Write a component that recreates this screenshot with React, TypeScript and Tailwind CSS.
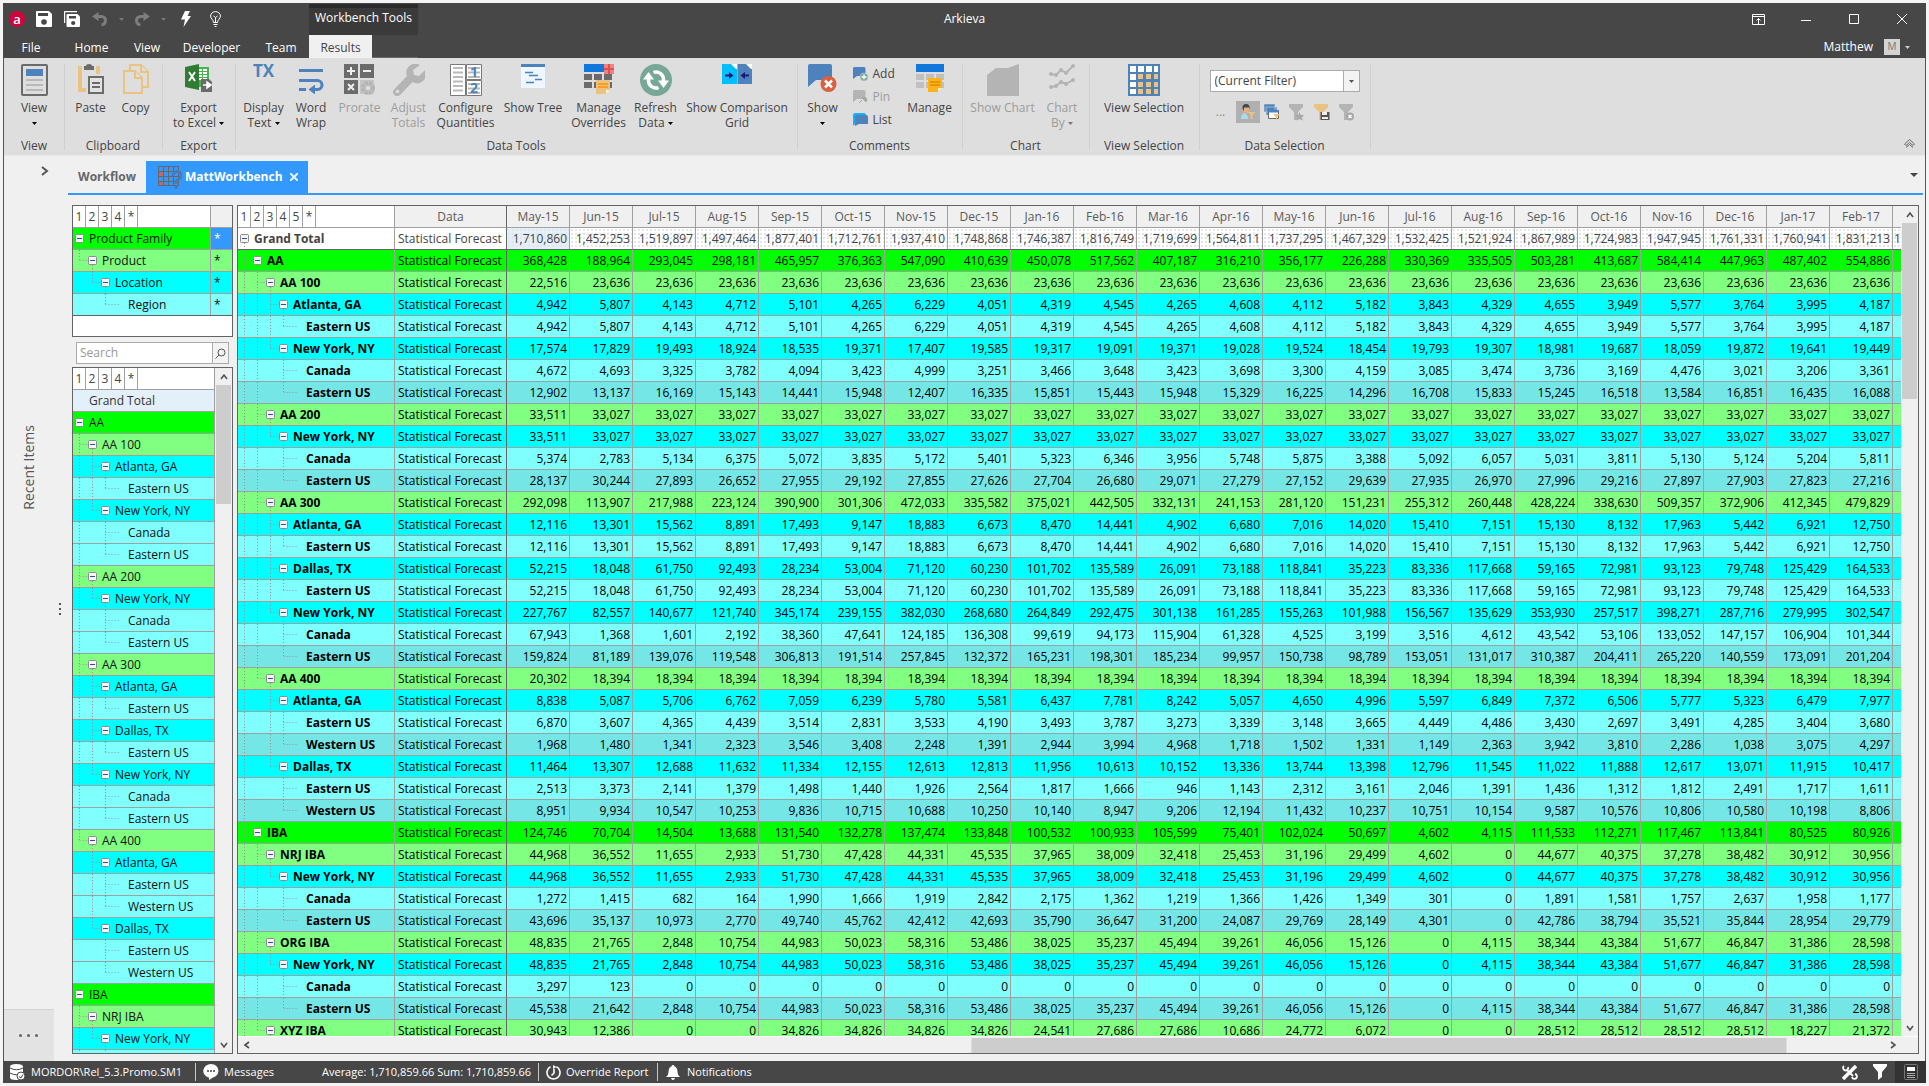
import { useState } from "react";
import type { ReactNode } from "react";

type Row = {
    level: number;
    name: string;
    values: string[];
};

const MONTHS =
    "May-15 Jun-15 Jul-15 Aug-15 Sep-15 Oct-15 Nov-15 Dec-15 Jan-16 Feb-16 Mar-16 Apr-16 May-16 Jun-16 Jul-16 Aug-16 Sep-16 Oct-16 Nov-16 Dec-16 Jan-17 Feb-17".split(" ");

const row = (level: number, name: string, values: string): Row => ({ level, name, values: values.split(" ") });

const FLAT = (first: string, rest: string) => [first, ...Array(21).fill(rest)].join(" ");

const ATL_100 = "4,942 5,807 4,143 4,712 5,101 4,265 6,229 4,051 4,319 4,545 4,265 4,608 4,112 5,182 3,843 4,329 4,655 3,949 5,577 3,764 3,995 4,187";
const ATL_300 = "12,116 13,301 15,562 8,891 17,493 9,147 18,883 6,673 8,470 14,441 4,902 6,680 7,016 14,020 15,410 7,151 15,130 8,132 17,963 5,442 6,921 12,750";
const DAL_300 = "52,215 18,048 61,750 92,493 28,234 53,004 71,120 60,230 101,702 135,589 26,091 73,188 118,841 35,223 83,336 117,668 59,165 72,981 93,123 79,748 125,429 164,533";
const NRJ = "44,968 36,552 11,655 2,933 51,730 47,428 44,331 45,535 37,965 38,009 32,418 25,453 31,196 29,499 4,602 0 44,677 40,375 37,278 38,482 30,912 30,956";
const ORG = "48,835 21,765 2,848 10,754 44,983 50,023 58,316 53,486 38,025 35,237 45,494 39,261 46,056 15,126 0 4,115 38,344 43,384 51,677 46,847 31,386 28,598";

const ROWS: Row[] = [
    row(0, "Grand Total", "1,710,860 1,452,253 1,519,897 1,497,464 1,877,401 1,712,761 1,937,410 1,748,868 1,746,387 1,816,749 1,719,699 1,564,811 1,737,295 1,467,329 1,532,425 1,521,924 1,867,989 1,724,983 1,947,945 1,761,331 1,760,941 1,831,213"),
    row(1, "AA", "368,428 188,964 293,045 298,181 465,957 376,363 547,090 410,639 450,078 517,562 407,187 316,210 356,177 226,288 330,369 335,505 503,281 413,687 584,414 447,963 487,402 554,886"),
    row(2, "AA 100", FLAT("22,516", "23,636")),
    row(3, "Atlanta, GA", ATL_100),
    row(4, "Eastern US", ATL_100),
    row(3, "New York, NY", "17,574 17,829 19,493 18,924 18,535 19,371 17,407 19,585 19,317 19,091 19,371 19,028 19,524 18,454 19,793 19,307 18,981 19,687 18,059 19,872 19,641 19,449"),
    row(4, "Canada", "4,672 4,693 3,325 3,782 4,094 3,423 4,999 3,251 3,466 3,648 3,423 3,698 3,300 4,159 3,085 3,474 3,736 3,169 4,476 3,021 3,206 3,361"),
    row(4, "Eastern US", "12,902 13,137 16,169 15,143 14,441 15,948 12,407 16,335 15,851 15,443 15,948 15,329 16,225 14,296 16,708 15,833 15,245 16,518 13,584 16,851 16,435 16,088"),
    row(2, "AA 200", FLAT("33,511", "33,027")),
    row(3, "New York, NY", FLAT("33,511", "33,027")),
    row(4, "Canada", "5,374 2,783 5,134 6,375 5,072 3,835 5,172 5,401 5,323 6,346 3,956 5,748 5,875 3,388 5,092 6,057 5,031 3,811 5,130 5,124 5,204 5,811"),
    row(4, "Eastern US", "28,137 30,244 27,893 26,652 27,955 29,192 27,855 27,626 27,704 26,680 29,071 27,279 27,152 29,639 27,935 26,970 27,996 29,216 27,897 27,903 27,823 27,216"),
    row(2, "AA 300", "292,098 113,907 217,988 223,124 390,900 301,306 472,033 335,582 375,021 442,505 332,131 241,153 281,120 151,231 255,312 260,448 428,224 338,630 509,357 372,906 412,345 479,829"),
    row(3, "Atlanta, GA", ATL_300),
    row(4, "Eastern US", ATL_300),
    row(3, "Dallas, TX", DAL_300),
    row(4, "Eastern US", DAL_300),
    row(3, "New York, NY", "227,767 82,557 140,677 121,740 345,174 239,155 382,030 268,680 264,849 292,475 301,138 161,285 155,263 101,988 156,567 135,629 353,930 257,517 398,271 287,716 279,995 302,547"),
    row(4, "Canada", "67,943 1,368 1,601 2,192 38,360 47,641 124,185 136,308 99,619 94,173 115,904 61,328 4,525 3,199 3,516 4,612 43,542 53,106 133,052 147,157 106,904 101,344"),
    row(4, "Eastern US", "159,824 81,189 139,076 119,548 306,813 191,514 257,845 132,372 165,231 198,301 185,234 99,957 150,738 98,789 153,051 131,017 310,387 204,411 265,220 140,559 173,091 201,204"),
    row(2, "AA 400", FLAT("20,302", "18,394")),
    row(3, "Atlanta, GA", "8,838 5,087 5,706 6,762 7,059 6,239 5,780 5,581 6,437 7,781 8,242 5,057 4,650 4,996 5,597 6,849 7,372 6,506 5,777 5,323 6,479 7,977"),
    row(4, "Eastern US", "6,870 3,607 4,365 4,439 3,514 2,831 3,533 4,190 3,493 3,787 3,273 3,339 3,148 3,665 4,449 4,486 3,430 2,697 3,491 4,285 3,404 3,680"),
    row(4, "Western US", "1,968 1,480 1,341 2,323 3,546 3,408 2,248 1,391 2,944 3,994 4,968 1,718 1,502 1,331 1,149 2,363 3,942 3,810 2,286 1,038 3,075 4,297"),
    row(3, "Dallas, TX", "11,464 13,307 12,688 11,632 11,334 12,155 12,613 12,813 11,956 10,613 10,152 13,336 13,744 13,398 12,796 11,545 11,022 11,888 12,617 13,071 11,915 10,417"),
    row(4, "Eastern US", "2,513 3,373 2,141 1,379 1,498 1,440 1,926 2,564 1,817 1,666 946 1,143 2,312 3,161 2,046 1,391 1,436 1,312 1,812 2,491 1,717 1,611"),
    row(4, "Western US", "8,951 9,934 10,547 10,253 9,836 10,715 10,688 10,250 10,140 8,947 9,206 12,194 11,432 10,237 10,751 10,154 9,587 10,576 10,806 10,580 10,198 8,806"),
    row(1, "IBA", "124,746 70,704 14,504 13,688 131,540 132,278 137,474 133,848 100,532 100,933 105,599 75,401 102,024 50,697 4,602 4,115 111,533 112,271 117,467 113,841 80,525 80,926"),
    row(2, "NRJ IBA", NRJ),
    row(3, "New York, NY", NRJ),
    row(4, "Canada", "1,272 1,415 682 164 1,990 1,666 1,919 2,842 2,175 1,362 1,219 1,366 1,426 1,349 301 0 1,891 1,581 1,757 2,637 1,958 1,177"),
    row(4, "Eastern US", "43,696 35,137 10,973 2,770 49,740 45,762 42,412 42,693 35,790 36,647 31,200 24,087 29,769 28,149 4,301 0 42,786 38,794 35,521 35,844 28,954 29,779"),
    row(2, "ORG IBA", ORG),
    row(3, "New York, NY", ORG),
    row(4, "Canada", FLAT("3,297", "0").replace("3,297 0", "3,297 123")),
    row(4, "Eastern US", "45,538 21,642 2,848 10,754 44,983 50,023 58,316 53,486 38,025 35,237 45,494 39,261 46,056 15,126 0 4,115 38,344 43,384 51,677 46,847 31,386 28,598"),
    row(2, "XYZ IBA", "30,943 12,386 0 0 34,826 34,826 34,826 34,826 24,541 27,686 27,686 10,686 24,772 6,072 0 0 28,512 28,512 28,512 28,512 18,227 21,372"),
];

// Levels of the rows that follow the loaded page, needed to continue the tree lines
const GRID_LEVELS = [...ROWS.map((r) => r.level), 3, 1];
const SIDE_ROWS = ROWS.slice(1, 31);
const SIDE_LEVELS = GRID_LEVELS.slice(1).map((l) => l - 1);

const LEVEL_BG = ["bg-white", "bg-[#00ff00]", "bg-[#80ff80]", "bg-[#00ffff]", "bg-[#80ffff]"];

function isAlternate(i: number) {
    return i > 0 && ROWS[i].level === 4 && ROWS[i - 1].level === 4;
}

function hasNextSibling(levels: number[], i: number, level: number) {
    for (let j = i + 1; j < levels.length; j++) {
        if (levels[j] === level) return true;
        if (levels[j] < level) return false;
    }
    return false;
}

function TreeLines({ levels, index }: { levels: number[]; index: number }) {
    const level = levels[index];
    const hasChildren = levels[index + 1] > level;
    const x = (l: number) => 6 + 13 * l + 0.5;
    const width = 13 * (level + 1);
    const verticals = [];
    for (let k = 0; k < level; k++) {
        const more = hasNextSibling(levels, index, k + 1);
        if (more || k === level - 1) {
            verticals.push(<path key={k} d={`M${x(k)} 0V${more ? 22 : 11}`} />);
        }
    }
    return (
        <svg width={width} height={22} className="shrink-0" aria-hidden="true">
            <g stroke="#a08c96" strokeDasharray="1 2" fill="none">
                {verticals}
                {level > 0 && <path d={`M${x(level - 1)} 10.5H${x(level)}`} />}
                {hasChildren && <path d={`M${x(level)} 15V22`} />}
            </g>
            {hasChildren && (
                <g>
                    <rect x={x(level) - 4} y={6.5} width={8} height={8} rx={1} fill="#f6f6f6" stroke="#8c8c8c" />
                    <path d={`M${x(level) - 2.5} 10.5h5`} stroke="#2a4fa5" />
                </g>
            )}
        </svg>
    );
}

function LevelButtons({ labels }: { labels: string[] }) {
    return (
        <div className="flex h-[21px]">
            {labels.map((label) => (
                <button key={label} type="button" className="w-[13px] border-r border-[#a0a0a0] text-center leading-[20px] text-[#444]">
                    {label}
                </button>
            ))}
        </div>
    );
}

function Chevron({ dir }: { dir: "up" | "down" | "left" | "right" }) {
    const paths = { up: "M1 6l3-4 3 4", down: "M1 2l3 4 3-4", left: "M6 1L2 4l4 3", right: "M2 1l4 3-4 3" };
    return (
        <svg width="8" height="8" viewBox="0 0 8 8" fill="none" stroke="#505050" strokeWidth="1.6" aria-hidden="true">
            <path d={paths[dir]} />
        </svg>
    );
}

function Caret({ className = "text-black" }: { className?: string }) {
    return (
        <svg width="5" height="3" viewBox="0 0 5 3" className={`inline-block align-middle ${className}`} aria-hidden="true">
            <path d="M0 0h5L2.5 3z" fill="currentColor" />
        </svg>
    );
}

/* ---------- title bar ---------- */

function IconButton({ label, className, children }: { label: string; className: string; children: ReactNode }) {
    return (
        <button type="button" aria-label={label} className={`flex items-center justify-center ${className}`}>
            {children}
        </button>
    );
}

function QuickAccess() {
    return (
        <div className="flex h-full items-center pl-[6px]">
            <span className="flex size-4 items-center justify-center rounded-full bg-[#d0043c] text-[13px] leading-[12px] font-semibold text-white">a</span>
            <IconButton label="Save" className="ml-[10px] w-[18px]">
                <svg width="16" height="16" viewBox="0 0 16 16">
                    <path d="M0 1q0-1 1-1h12l3 3v12q0 1-1 1H1q-1 0-1-1z" fill="#fff" />
                    <path d="M2 2h10v3H2z" fill="#474747" />
                    <circle cx="8" cy="11" r="2.8" fill="#474747" />
                </svg>
            </IconButton>
            <IconButton label="Save all" className="ml-[10px] w-[18px]">
                <svg width="16" height="16" viewBox="0 0 16 16">
                    <path d="M0.5 12V1.5q0-1 1-1H13" fill="none" stroke="#fff" strokeWidth="1.4" />
                    <path d="M2.5 4q0-1 1-1h10L16 5.5V15q0 1-1 1H3.5q-1 0-1-1z" fill="#fff" />
                    <path d="M5 5h7v2.5H5z" fill="#474747" />
                    <circle cx="9.2" cy="12" r="2.1" fill="#474747" />
                </svg>
            </IconButton>
            <IconButton label="Undo" className="ml-[10px] w-[18px]">
                <svg width="16" height="14" viewBox="0 0 16 14" fill="none" stroke="#7d7d7d">
                    <path d="M4 4.5h5.5a4 4 0 0 1 4 4c0 2.500-1.500 4-4 4.500" strokeWidth="3" />
                    <path d="M0 4.5L6.500 0v9z" fill="#7d7d7d" stroke="none" />
                </svg>
            </IconButton>
            <span className="w-[24px] text-center leading-[10px]"><Caret className="text-[#777]" /></span>
            <IconButton label="Redo" className="w-[18px]">
                <svg width="16" height="14" viewBox="0 0 16 14" fill="none" stroke="#7d7d7d">
                    <path d="M12 4.5H6.500a4 4 0 0 0-4 4c0 2.500 1.500 4 4 4.500" strokeWidth="3" />
                    <path d="M16 4.5L9.500 0v9z" fill="#7d7d7d" stroke="none" />
                </svg>
            </IconButton>
            <span className="w-[24px] text-center leading-[10px]"><Caret className="text-[#777]" /></span>
            <IconButton label="Run" className="w-[22px]">
                <svg width="10" height="16" viewBox="0 0 10 16"><path d="M4 0h5L6.5 5H10L2.5 16 4 8.5H0z" fill="#fff" /></svg>
            </IconButton>
            <IconButton label="Tips" className="ml-[8px] w-[20px]">
                <svg width="11" height="16" viewBox="0 0 11 16" fill="none" stroke="#fff">
                    <path d="M3.5 11.5C3.5 8.5.6 8 .6 5a4.9 4.4 0 0 1 9.8 0c0 3-2.900 3.5-2.900 6.5z" />
                    <path d="M3.5 5l2 1.5 2-1.5M5.5 6.5V11M3.5 13.5h4M4.5 15.5h2" />
                </svg>
            </IconButton>
        </div>
    );
}

function TitleBar() {
    return (
        <header className="grid shrink-0 grid-cols-[1fr_auto_1fr] grid-rows-[32px_23px] bg-[#474747] text-white">
            <div className="flex">
                <div className="w-[306px]"><QuickAccess /></div>
                <div className="mt-px w-[109px] border-t-4 border-[#2b2b2b] bg-[#3a3a3a] text-center leading-[20px]">Workbench Tools</div>
            </div>
            <h1 className="leading-[32px]">Arkieva</h1>
            <div className="flex justify-end">
                <IconButton label="Ribbon display options" className="w-12">
                    <svg width="13" height="11" viewBox="0 0 13 11" fill="none" stroke="#fff"><path d="M.5.5h12v10H.5zM.5 2.5h12M6.5 10V4.5M4.5 6.5l2-2 2 2" /></svg>
                </IconButton>
                <IconButton label="Minimize" className="w-12">
                    <svg width="10" height="10" viewBox="0 0 10 10"><path d="M0 6.5h10" stroke="#fff" /></svg>
                </IconButton>
                <IconButton label="Maximize" className="w-12">
                    <svg width="10" height="10" viewBox="0 0 10 10"><path d="M.5.5h9v9h-9z" stroke="#fff" fill="none" /></svg>
                </IconButton>
                <IconButton label="Close" className="w-12">
                    <svg width="10" height="10" viewBox="0 0 10 10"><path d="M0 0l10 10M10 0L0 10" stroke="#fff" /></svg>
                </IconButton>
            </div>
            <nav className="flex leading-[25px]">
                <a href="#file" className="w-[56px] text-center">File</a>
                <a href="#home" className="w-[65px] text-center">Home</a>
                <a href="#view" className="w-[46px] text-center">View</a>
                <a href="#developer" className="w-[83px] text-center">Developer</a>
                <a href="#team" className="w-[56px] text-center">Team</a>
                <a href="#results" className="w-[63px] bg-[#f0f0f0] text-center text-[#444]">Results</a>
                <span className="w-[46px] border-b border-[#6a6a6a]" />
            </nav>
            <span />
            <div className="flex items-center justify-end pr-[16px]">
                Matthew
                <span className="ml-[11px] flex size-4 items-center justify-center bg-[#d4d4d4] text-[10px] text-[#777]">M</span>
                <span className="ml-[5px] leading-[10px]"><Caret className="text-[#ccc]" /></span>
            </div>
        </header>
    );
}

/* ---------- ribbon ---------- */

function RibbonGroup({ label, width, children }: { label: string; width: string; children: ReactNode }) {
    return (
        <section className={`flex shrink-0 pt-[6px] ${width}`}>
            <div className="flex flex-1 flex-col pb-[2px]">
                <div className="flex flex-1 justify-center">{children}</div>
                <div className="h-[15px] text-center leading-[15px]">{label}</div>
            </div>
            <div className="-mr-px mb-[5px] border-r border-[#d0d0d0]" />
        </section>
    );
}

interface RibbonButtonProps {
    lines: string[];
    width: string;
    disabled?: boolean;
    menu?: boolean;
    children: ReactNode;
}

function RibbonButton({ lines, width, disabled, menu, children }: RibbonButtonProps) {
    return (
        <button type="button" disabled={disabled} className={`flex shrink-0 flex-col items-center ${width} ${disabled ? "text-[#9c9c9c]" : "text-[#444]"}`}>
            <span className="mb-[4px] flex h-8 items-start">{children}</span>
            {lines.map((line, i) => (
                <span key={i} className="h-[15px] leading-[15px] whitespace-nowrap">
                    {line}
                    {menu && i === lines.length - 1 && (
                        <>
                            {line && " "}
                            <Caret className={disabled ? "text-[#777]" : "text-black"} />
                        </>
                    )}
                </span>
            ))}
        </button>
    );
}

function ViewIcon() {
    return (
        <svg width="27" height="32" viewBox="0 0 27 32">
            <rect x="1" y="1" width="25" height="30" rx="1" fill="#dedede" stroke="#6b6b6b" strokeWidth="2" />
            <rect x="5" y="5" width="17" height="7" fill="#4d82bc" />
            <path d="M5 16h17M5 21h17M5 26h17" stroke="#b9b9b9" strokeWidth="2" />
        </svg>
    );
}

function PasteIcon() {
    return (
        <svg width="26" height="30" viewBox="0 0 26 30">
            <path d="M0 2h4v22h4v4H0zM18 2h4v8h-4z" fill="#eac282" />
            <path d="M6 2h2q0-2 3-2t3 2h2v4H6z" fill="#6b6b6b" />
            <path d="M11 13h14v16H11z" fill="#e2e2e2" stroke="#6b6b6b" strokeWidth="2" />
            <path d="M14 19h8M14 23h8" stroke="#6b6b6b" strokeWidth="2" />
        </svg>
    );
}

function CopyIcon() {
    return (
        <svg width="26" height="30" viewBox="0 0 26 30" fill="#dedede" stroke="#eac282" strokeWidth="2">
            <path d="M7 6V1h11l7 7v15h-5" />
            <path d="M18 1v7h7" />
            <path d="M1 7h11l7 7v15H1z" />
            <path d="M12 7v7h7" />
        </svg>
    );
}

function ExcelIcon() {
    return (
        <svg width="27" height="28" viewBox="0 0 27 28">
            <path d="M12 3h12v20H12z" fill="#4caf50" />
            <path d="M14 6h3M18 6h4M14 9h3M18 9h4M14 12h3M18 12h4M14 15h3M18 15h4" stroke="#fff" strokeWidth="2" />
            <path d="M0 3l14-3v26L0 23z" fill="#2e7d32" />
            <path d="M4 8l6 9M10 8l-6 9" stroke="#fff" strokeWidth="2" />
            <path d="M16 15h8l3 3v10H16z" fill="#6b6b6b" />
            <path d="M18 21h5M22 18l4 3-4 3z" stroke="#fff" strokeWidth="1.5" fill="#fff" />
        </svg>
    );
}

function WrapIcon() {
    return (
        <svg width="25" height="30" viewBox="0 0 25 30" fill="none" stroke="#4d82bc" strokeWidth="3">
            <path d="M0 6.5h24M0 16.5h18.5a4.5 4.5 0 0 1 0 9H14M0 25.5h7" />
            <path d="M16 20.5v10L9.5 25.5z" fill="#4d82bc" stroke="none" />
        </svg>
    );
}

function ProrateIcon() {
    return (
        <svg width="31" height="32" viewBox="0 0 31 32">
            <path d="M0 0h14v14H0zM16 0h14v14H16zM0 16h14v14H0z" fill="#6b6b6b" />
            <path d="M3 7h8M7 3v8M19 7h8M4 20l6 6M10 20l-6 6" stroke="#eee" strokeWidth="2" />
            <path d="M16 16h14v14H16z" fill="#c4c4c4" />
            <circle cx="24" cy="24" r="5" fill="none" stroke="#b4b4b4" strokeWidth="4" strokeDasharray="3 1" />
            <circle cx="24" cy="24" r="2" fill="#dedede" />
        </svg>
    );
}

function WrenchIcon() {
    return (
        <svg width="32" height="32" viewBox="0 0 32 32">
            <path d="M27 1A9 9 0 0 0 14 12L1.5 25a4 4 0 0 0 5.5 6L19.5 18A9 9 0 0 0 32 6l-6 6-5-1-1-5z" fill="#b4b4b4" />
            <circle cx="4.5" cy="27.5" r="1.8" fill="#dedede" />
        </svg>
    );
}

function ConfigureIcon() {
    return (
        <svg width="32" height="32" viewBox="0 0 32 32">
            <path d="M.5.5h15v31H.5zM16.5.5h15v15h-15zM16.5 16.5h15v15h-15z" fill="#fff" stroke="#7a7a7a" />
            <path d="M3 4h10M3 8.500h10M3 13h10M3 17.500h10M3 22h10M3 26.500h10M18 4h12M18 8.500h12M18 13h12M18 20h12M18 24.500h12M18 29h12" stroke="#b9b9b9" strokeWidth="2" />
            <text x="24" y="13" textAnchor="middle" fontSize="14" fontWeight="700" fill="#4d82bc">1</text>
            <text x="24" y="29" textAnchor="middle" fontSize="14" fontWeight="700" fill="#4d82bc">2</text>
        </svg>
    );
}

function ShowTreeIcon() {
    return (
        <svg width="24" height="24" viewBox="0 0 24 24">
            <path d="M0 0h24v24H0z" fill="#eef6ff" />
            <path d="M0 0h24v3H0z" fill="#4d82bc" />
            <path d="M4 8.500h8M8 11.500h9M14 15.500h7M5 18.500h8" stroke="#4d82bc" strokeWidth="1.5" />
        </svg>
    );
}

function GridNoteIcon({ override }: { override?: boolean }) {
    const cell = override ? "#6b6b6b" : "#c0c0c0";
    return (
        <svg width={override ? 30 : 28} height="30" viewBox={override ? "0 0 30 30" : "0 0 28 30"}>
            <path d="M0 0h28v8H0z" fill="#1177da" />
            <path d="M0 10h8v6H0zM10 10h8v6h-8zM20 10h8v6h-8zM0 18h8v6H0zM10 18h8v6h-8zM20 18h8v6h-8z" fill={cell} />
            {override && (
                <>
                    <path d="M20 0h10v10H20z" fill="#f48181" />
                    <path d="M25 0v10M20 5h10" stroke="#d9534f" strokeWidth="2" />
                </>
            )}
            <g transform={override ? "translate(0 2)" : ""}>
                <path d="M12 14h14v10l-4 4H12z" fill={override ? "#eac282" : "#ffb319"} />
                <path d="M14 18h10M14 21h10" stroke={override ? "#ff9000" : "#d98e00"} strokeWidth="1.5" />
                <path d="M22 28v-4h4z" fill="#fff0d0" />
            </g>
        </svg>
    );
}

function RefreshIcon() {
    return (
        <svg width="32" height="32" viewBox="0 0 32 32">
            <circle cx="16" cy="16" r="16" fill="#76a797" />
            <g fill="none" stroke="#fff" strokeWidth="3.5">
                <path d="M8.500 14v2.500a7.500 7.500 0 0 0 10 7.100" />
                <path d="M13.500 8.400a7.500 7.500 0 0 1 10 7.100V18" />
            </g>
            <path d="M3 15.500L8.500 8l5.500 7.500zM18 16.500h11L23.500 24z" fill="#fff" />
        </svg>
    );
}

function CompareIcon() {
    return (
        <svg width="30" height="20" viewBox="0 0 30 20">
            <path d="M0 0h15v20H0z" fill="#00bfff" />
            <path d="M15.500 0H30v20H15.500z" fill="#4d82bc" />
            <path d="M9 0h6v5h-1zM24 0h6v5h-1z" fill="#fff" />
            <path d="M3 11.500h5M22 11.500h5" stroke="#1a1a7a" strokeWidth="2" />
            <path d="M7 8l4.500 3.500L7 15zM23 8v7l-4.500-3.500z" fill="#1a1a7a" />
        </svg>
    );
}

function ShowCommentIcon() {
    return (
        <svg width="29" height="28" viewBox="0 0 29 28">
            <path d="M0 2q0-2 2-2h20q2 0 2 2v14H8l-8 7z" fill="#4d82bc" />
            <circle cx="20.500" cy="20" r="8" fill="#d9613f" />
            <path d="M17 16.500l7 7M24 16.500l-7 7" stroke="#fff" strokeWidth="2.5" />
        </svg>
    );
}

function SmallComment({ kind }: { kind: "add" | "pin" | "list" }) {
    return (
        <svg width="15" height="14" viewBox="0 0 15 14">
            {kind === "list" && <path d="M0 2q0-2 2-2h9q2 0 2 2v7H4l-4 4z" fill="#12b2f5" />}
            <path
                d={kind === "list" ? "M2 3.500Q2 2 3.500 2H13q2 0 2 2v7H6l-4 2z" : "M0 1.500Q0 0 1.500 0H11q1.500 0 1.500 1.500V9H4l-4 3z"}
                fill={kind === "pin" ? "#b4b4b4" : "#4d82bc"}
            />
            {kind === "add" && (
                <>
                    <circle cx="11" cy="10" r="4" fill="#76a797" stroke="#dedede" strokeWidth=".5" />
                    <path d="M11 7.500v5M8.500 10h5" stroke="#fff" strokeWidth="1.3" />
                </>
            )}
            {kind === "pin" && <path d="M6 13l3-3M9 8l4 4 1-3-2-2z" stroke="#a8a8a8" fill="#a8a8a8" />}
        </svg>
    );
}

function ChartAreaIcon() {
    return <svg width="32" height="32" viewBox="0 0 32 32"><path d="M0 11L9 4h12L32 0v32H0z" fill="#b4b4b4" /></svg>;
}

function ChartLinesIcon() {
    return (
        <svg width="26" height="26" viewBox="0 0 26 26" fill="none" stroke="#b4b4b4" strokeWidth="2">
            <path d="M2 10l5 1 5-5 5 3 7-7" />
            <path d="M2 23l5-1 5-4 5 2 7-4" />
            <g fill="#b4b4b4" strokeWidth="1">
                <circle cx="2" cy="10" r="1.5" /><circle cx="7" cy="11" r="1.5" /><circle cx="12" cy="6" r="1.5" /><circle cx="17" cy="9" r="1.5" /><circle cx="24" cy="2" r="1.5" />
                <circle cx="2" cy="23" r="1.5" /><circle cx="7" cy="22" r="1.5" /><circle cx="12" cy="18" r="1.5" /><circle cx="17" cy="20" r="1.5" /><circle cx="24" cy="16" r="1.5" />
            </g>
        </svg>
    );
}

function SelectionGridIcon() {
    return (
        <svg width="32" height="32" viewBox="0 0 32 32">
            <path d="M0 0h32v32H0z" fill="#4d82bc" />
            <path d="M2 2h6v6H2zM10 2h6v6h-6zM18 2h6v6h-6zM26 2h4v6h-4zM2 10h6v6H2zM2 18h6v5H2zM2 25h6v5H2z" fill="#fff" />
            <path d="M10 10h5v5h-5zM18 10h5v5h-5zM26 10h4v5h-4zM10 18h5v5h-5zM18 18h5v5h-5zM26 18h4v5h-4zM10 25h5v5h-5zM18 25h5v5h-5zM26 25h4v5h-4z" fill="#eac282" />
        </svg>
    );
}

function FunnelIcon({ kind }: { kind: "star" | "save" | "clear" }) {
    return (
        <svg width="16" height="17" viewBox="0 0 16 17">
            <path d="M0 0h14v3L9 8v8H5V8L0 3z" fill={kind === "save" ? "#eac282" : "#b4b4b4"} />
            {kind === "star" && <path d="M10.500 8l1.500 3h3l-2 2.500.8 3-3.300-1.500-3 1.500.8-3-2-2.500h3z" fill="#a8a8a8" />}
            {kind === "save" && (
                <>
                    <path d="M6.500 8h9v8h-9z" fill="#555" />
                    <path d="M8 8h5v3H8zM8 13h6v2H8z" fill="#eee" />
                </>
            )}
            {kind === "clear" && (
                <>
                    <circle cx="11" cy="12.500" r="4" fill="#a8a8a8" />
                    <path d="M9.500 11l3 3M12.500 11l-3 3" stroke="#fff" strokeWidth="1.4" />
                </>
            )}
        </svg>
    );
}

function Ribbon() {
    return (
        <div className="flex h-[98px] shrink-0 justify-between border-b border-[#e6e6e6] bg-[#dedede] text-[#444]">
            <div className="flex">
                <RibbonGroup label="View" width="w-[60px]">
                    <RibbonButton lines={["View", ""]} width="w-[48px]" menu><ViewIcon /></RibbonButton>
                </RibbonGroup>
                <RibbonGroup label="Clipboard" width="w-[98px]">
                    <RibbonButton lines={["Paste"]} width="w-[45px]"><PasteIcon /></RibbonButton>
                    <RibbonButton lines={["Copy"]} width="w-[45px]"><CopyIcon /></RibbonButton>
                </RibbonGroup>
                <RibbonGroup label="Export" width="w-[73px]">
                    <RibbonButton lines={["Export", "to Excel"]} width="w-[60px]" menu><ExcelIcon /></RibbonButton>
                </RibbonGroup>
                <RibbonGroup label="Data Tools" width="w-[562px]">
                    <RibbonButton lines={["Display", "Text"]} width="w-[48px]" menu>
                        <span className="text-[17px] leading-[14px] font-bold text-[#4d82bc]">TX</span>
                    </RibbonButton>
                    <RibbonButton lines={["Word", "Wrap"]} width="w-[47px]"><WrapIcon /></RibbonButton>
                    <RibbonButton lines={["Prorate"]} width="w-[50px]" disabled><ProrateIcon /></RibbonButton>
                    <RibbonButton lines={["Adjust", "Totals"]} width="w-[48px]" disabled><WrenchIcon /></RibbonButton>
                    <RibbonButton lines={["Configure", "Quantities"]} width="w-[66px]"><ConfigureIcon /></RibbonButton>
                    <RibbonButton lines={["Show Tree"]} width="w-[69px]"><ShowTreeIcon /></RibbonButton>
                    <RibbonButton lines={["Manage", "Overrides"]} width="w-[62px]"><GridNoteIcon override /></RibbonButton>
                    <RibbonButton lines={["Refresh", "Data"]} width="w-[52px]" menu><RefreshIcon /></RibbonButton>
                    <RibbonButton lines={["Show Comparison", "Grid"]} width="w-[111px]"><CompareIcon /></RibbonButton>
                </RibbonGroup>
                <RibbonGroup label="Comments" width="w-[165px]">
                    <div className="flex pr-[6px]">
                        <RibbonButton lines={["Show", ""]} width="w-[50px]" menu><ShowCommentIcon /></RibbonButton>
                        <div className="flex w-[56px] flex-col gap-[3px] pl-[5px]">
                            <button type="button" className="flex h-5 items-center gap-[5px]"><SmallComment kind="add" />Add</button>
                            <button type="button" disabled className="flex h-5 items-center gap-[5px] text-[#9c9c9c]"><SmallComment kind="pin" />Pin</button>
                            <button type="button" className="flex h-5 items-center gap-[5px]"><SmallComment kind="list" />List</button>
                        </div>
                        <RibbonButton lines={["Manage"]} width="w-[52px]"><GridNoteIcon /></RibbonButton>
                    </div>
                </RibbonGroup>
                <RibbonGroup label="Chart" width="w-[127px]">
                    <div className="flex pr-[2px]">
                        <RibbonButton lines={["Show Chart"]} width="w-[75px]" disabled><ChartAreaIcon /></RibbonButton>
                        <RibbonButton lines={["Chart", "By"]} width="w-[44px]" disabled menu><ChartLinesIcon /></RibbonButton>
                    </div>
                </RibbonGroup>
                <RibbonGroup label="View Selection" width="w-[110px]">
                    <RibbonButton lines={["View Selection"]} width="w-[90px]"><SelectionGridIcon /></RibbonButton>
                </RibbonGroup>
                <RibbonGroup label="Data Selection" width="w-[171px]">
                    <div className="w-[150px] pt-[6px]">
                        <div className="relative">
                            <select aria-label="Filter" className="block h-[22px] w-full appearance-none border border-[#ababab] bg-white pl-[4px] text-[#444]">
                                <option>(Current Filter)</option>
                            </select>
                            <span className="pointer-events-none absolute inset-y-px right-px flex w-4 items-center justify-center border-l border-[#ababab] bg-[#f3f3f3]">
                                <Caret className="text-[#555]" />
                            </span>
                        </div>
                        <div className="mt-[9px] flex h-[22px] items-center gap-1">
                            <button type="button" aria-label="More" className="w-[22px] text-center leading-[18px] text-[#888]">...</button>
                            <IconButton label="My filter" className="h-[22px] w-6 bg-[#b0b0b0]">
                                <svg width="14" height="16" viewBox="0 0 14 16">
                                    <circle cx="5" cy="3.500" r="3.500" fill="#3b4a4f" />
                                    <path d="M3 3.500h5V8l-2 2-3-2z" fill="#e8b080" />
                                    <path d="M0 15q0-5 3.500-6L6 11l1.500 4z" fill="#a8dcf0" />
                                    <path d="M7 8h7l-2.500 3v4H9.500v-4z" fill="#eac282" />
                                </svg>
                            </IconButton>
                            <div className="flex gap-[9px]">
                                <IconButton label="Layers" className="w-4">
                                    <svg width="16" height="16" viewBox="0 0 16 16">
                                        <path d="M0 0h11v8H0zM2 3h11v8H2z" fill="#4d82bc" stroke="#dedede" strokeWidth=".6" />
                                        <path d="M4.500 6.500h10v8h-10z" fill="#fff" stroke="#666" />
                                        <path d="M4 6h11v2.500H4z" fill="#4d82bc" />
                                        <path d="M9 10h7l-3 3v3h-1v-3z" fill="#eac282" />
                                    </svg>
                                </IconButton>
                                <IconButton label="Favourite filter" className="w-4"><FunnelIcon kind="star" /></IconButton>
                                <IconButton label="Save filter" className="w-4"><FunnelIcon kind="save" /></IconButton>
                                <IconButton label="Clear filter" className="w-4"><FunnelIcon kind="clear" /></IconButton>
                            </div>
                        </div>
                    </div>
                </RibbonGroup>
            </div>
            <IconButton label="Collapse ribbon" className="mr-[10px] mb-[6px] self-end">
                <svg width="11" height="10" viewBox="0 0 11 10" fill="none" stroke="#666">
                    <path d="M.5 5l5-4.500 5 4.500-1.500 1.500-3.500-3L2 6.500zM2 8.500l3.500-3 3.500 3" />
                </svg>
            </IconButton>
        </div>
    );
}

/* ---------- work area ---------- */

function RecentRail() {
    return (
        <aside className="flex w-[64px] shrink-0">
            <div className="flex w-[50px] flex-col">
                <button type="button" aria-label="Expand" className="flex h-[30px] items-center justify-end pr-[5px]">
                    <svg width="8" height="10" viewBox="0 0 8 10" fill="none" stroke="#555" strokeWidth="2"><path d="M1 1l5 4-5 4" /></svg>
                </button>
                <div className="flex flex-1 items-start justify-center pt-[239px]">
                    <span className="rotate-180 text-[14px] leading-[20px] text-[#555] [writing-mode:vertical-rl]">Recent Items</span>
                </div>
                <button type="button" aria-label="More items" className="flex h-[52px] items-center justify-center gap-[5px] border-t border-[#d4d4d4] bg-[#e3e3e3] pr-[2px]">
                    <i className="size-[3px] rounded-full bg-[#666]" />
                    <i className="size-[3px] rounded-full bg-[#666]" />
                    <i className="size-[3px] rounded-full bg-[#666]" />
                </button>
            </div>
            <div className="flex flex-col justify-center gap-[3px] pl-[5px]">
                <i className="size-[2px] bg-[#555]" />
                <i className="size-[2px] bg-[#555]" />
                <i className="size-[2px] bg-[#555]" />
            </div>
        </aside>
    );
}

function DocumentTabs() {
    return (
        <div className="flex h-[39px] shrink-0 items-end border-b-2 border-[#3399ff] font-bold">
            <button type="button" className="h-8 w-[78px] text-center text-[#666]">Workflow</button>
            <div className="flex h-8 w-[162px] items-center bg-[#3399ff] pl-[12px] text-white">
                <svg width="24" height="24" viewBox="0 0 24 24" fill="none">
                    <path d="M1 6h5v5H1zM1 16h5v5H1z" fill="#c26a6a" />
                    <path d="M.5 1.500h20v19H.5zM.5 6.500h20M.5 11.500h20M.5 16.500h20M5.500 1.500v19M10.500 1.500v19M15.500 1.500v19" stroke="#666" />
                    <path d="M15 11a4 4 0 1 1 6 3q-3 1-3 3v2M18 21v3" stroke="#4a7ab5" strokeWidth="3" />
                </svg>
                <button type="button" className="ml-[3px]">MattWorkbench</button>
                <button type="button" aria-label="Close tab" className="ml-auto mr-[9px] flex size-[10px] items-center justify-center">
                    <svg width="8" height="8" viewBox="0 0 8 8" stroke="#e8f2ff" strokeWidth="2"><path d="M0 0l8 8M8 0L0 8" /></svg>
                </button>
            </div>
            <button type="button" aria-label="Open documents" className="mr-[5px] mb-[8px] ml-auto">
                <svg width="8" height="12" viewBox="0 0 8 12"><path d="M0 0h8L4 4z" fill="#444" /></svg>
            </button>
        </div>
    );
}

const HIERARCHY = ["Product Family", "Product", "Location", "Region"];

function HierarchyPanel() {
    return (
        <div className="h-[132px] shrink-0 border border-[#646464] bg-white">
            <div className="flex h-[22px] border-b border-[#a0a0a0]">
                <div className="flex-1"><LevelButtons labels={["1", "2", "3", "4", "*"]} /></div>
                <div className="w-[22px] border-l border-[#a0a0a0] bg-[#f0f0f0]" />
            </div>
            {HIERARCHY.map((name, i) => (
                <div key={name} className={`flex h-[22px] border-b text-[#111] ${LEVEL_BG[i + 1]} ${i === 3 ? "border-[#646464]" : "border-[#a0a0a0]"}`}>
                    <div className="flex flex-1 gap-[3px] leading-[21px]">
                        <TreeLines levels={[0, 1, 2, 3]} index={i} />
                        {name}
                    </div>
                    <div className={`w-[22px] border-l border-[#a0a0a0] pl-[3px] leading-[21px] ${i === 0 ? "bg-[#3399ff] text-white" : ""}`}>*</div>
                </div>
            ))}
        </div>
    );
}

function SidePanel() {
    const [query, setQuery] = useState("");
    return (
        <div className="flex w-[161px] shrink-0 flex-col">
            <HierarchyPanel />
            <div className="mx-[4px] mt-[5px] mb-[3px] flex h-[22px] shrink-0 border border-[#ababab] bg-white">
                <input
                    aria-label="Search"
                    placeholder="Search"
                    value={query}
                    onChange={(e) => setQuery(e.target.value)}
                    className="w-0 flex-1 pl-[3px] outline-none placeholder:text-[#999]"
                />
                <IconButton label="Find" className="w-4 border-l border-[#ababab] bg-[#f3f3f3]">
                    <svg width="11" height="11" viewBox="0 0 11 11" fill="none" stroke="#555"><circle cx="6.500" cy="4.500" r="3.500" /><path d="M4 7L.5 10.500" /></svg>
                </IconButton>
            </div>
            <div className="flex min-h-0 flex-1 border border-[#646464] bg-[#f0f0f0]">
                <div className="min-w-0 flex-1 overflow-hidden border-r border-[#a0a0a0]">
                    <div className="h-[22px] border-b border-[#a0a0a0] bg-white">
                        <LevelButtons labels={["1", "2", "3", "4", "*"]} />
                    </div>
                    <div className="h-[22px] border-b border-[#a0a0a0] bg-[#e3f0fa] pl-[16px] leading-[21px] text-[#333]">Grand Total</div>
                    {SIDE_ROWS.map((r, i) => (
                        <div key={i} className={`flex h-[22px] gap-[3px] border-b border-[#a0a0a0] leading-[21px] text-[#111] ${LEVEL_BG[r.level]}`}>
                            <TreeLines levels={SIDE_LEVELS} index={i} />
                            {r.name}
                        </div>
                    ))}
                </div>
                <VerticalScroll thumb="h-[119px]" />
            </div>
        </div>
    );
}

function VerticalScroll({ thumb }: { thumb: string }) {
    return (
        <div className="flex w-[17px] shrink-0 flex-col items-center bg-[#f0f0f0]">
            <button type="button" aria-label="Scroll up" className="flex h-[17px] w-full items-center justify-center"><Chevron dir="up" /></button>
            <div className={`w-[15px] bg-[#cdcdcd] ${thumb}`} />
            <button type="button" aria-label="Scroll down" className="mt-auto flex h-[17px] w-full items-center justify-center"><Chevron dir="down" /></button>
        </div>
    );
}

function ForecastGrid() {
    return (
        <div className="flex min-w-0 flex-1 flex-col border border-[#646464] bg-[#f0f0f0]">
            <div className="flex min-h-0 flex-1">
                <div className="min-w-0 flex-1 overflow-hidden">
                    <table className="w-full table-fixed border-separate border-spacing-0">
                        <colgroup>
                            <col className="w-[157px]" />
                            <col className="w-[112px]" />
                            {MONTHS.map((m) => <col key={m} className="w-[63px]" />)}
                            <col />
                        </colgroup>
                        <thead className="leading-[20px] text-[#5a5a5a]">
                            <tr className="h-[22px]">
                                <th className="border-r border-b border-[#a0a0a0] bg-white p-0 font-normal">
                                    <LevelButtons labels={["1", "2", "3", "4", "5", "*"]} />
                                </th>
                                <th className="border-r border-r-[#646464] border-b border-b-[#a0a0a0] p-0 pt-px font-normal">Data</th>
                                {MONTHS.map((m) => (
                                    <th key={m} className="border-r border-b border-[#a0a0a0] p-0 pt-px font-normal">{m}</th>
                                ))}
                                <th className="border-b border-[#a0a0a0] p-0" />
                            </tr>
                        </thead>
                        <tbody className="leading-[20px]">
                            {ROWS.map((r, i) => {
                                const total = r.level === 0;
                                const bg = isAlternate(i) ? "bg-[#75e6e6]" : LEVEL_BG[r.level];
                                const line = total ? "border-b-[#646464]" : "border-b-[#a0a0a0]";
                                const dots = total ? "bg-[radial-gradient(#e2e6ea_1px,transparent_1px)] bg-[size:4px_4px]" : "";
                                return (
                                    <tr key={i} className={`h-[22px] ${bg} ${total ? "text-[#444]" : "text-black"}`}>
                                        <th scope="row" className={`border-r border-b border-r-[#a0a0a0] p-0 text-left font-bold ${line}`}>
                                            <div className="flex h-[21px] gap-[3px] overflow-hidden">
                                                <TreeLines levels={GRID_LEVELS} index={i} />
                                                <span className="pt-px">{r.name}</span>
                                            </div>
                                        </th>
                                        <td className={`border-r border-b border-r-[#646464] p-0 pt-px pl-[3px] whitespace-nowrap ${line}`}>Statistical Forecast</td>
                                        {r.values.map((v, c) => (
                                            <td key={c} className={`border-r border-b border-r-[#a0a0a0] p-0 pr-[2px] text-right ${line} ${dots} ${total && c === 0 ? "bg-[#e3f0fa]" : ""}`}>
                                                {v}
                                            </td>
                                        ))}
                                        <td className={`overflow-hidden border-b p-0 pl-px ${line} ${dots}`}>{total ? "1" : ""}</td>
                                    </tr>
                                );
                            })}
                        </tbody>
                    </table>
                </div>
                <VerticalScroll thumb="h-[176px]" />
            </div>
            <div className="flex h-[17px] shrink-0 items-center border-t border-white pr-[17px]">
                <button type="button" aria-label="Scroll left" className="flex w-[17px] justify-center"><Chevron dir="left" /></button>
                <div className="flex-1">
                    <div className="mx-auto h-[15px] w-1/2 translate-x-[38%] bg-[#cdcdcd]" />
                </div>
                <button type="button" aria-label="Scroll right" className="flex w-[17px] justify-center"><Chevron dir="right" /></button>
            </div>
        </div>
    );
}

function StatusBar() {
    return (
        <footer className="flex h-[22px] shrink-0 items-center bg-[#474747] text-[11px] text-white">
            <div className="flex h-[18px] w-[193px] items-center gap-[6px] border-r border-[#c8c8c8] pl-[7px]">
                <svg width="15" height="16" viewBox="0 0 15 16" className="shrink-0">
                    <path d="M0 2.500Q0 0 6.500 0T13 2.500v11Q13 16 6.500 16T0 13.500z" fill="#fff" />
                    <path d="M0 4q6.500 3.500 13 0M0 9q6.500 3.500 13 0" fill="none" stroke="#474747" />
                    <circle cx="11" cy="12" r="4" fill="#fff" stroke="#474747" />
                    <path d="M9 12.500l2 1.500 2-3.500" fill="none" stroke="#474747" />
                </svg>
                MORDOR\Rel_5.3.Promo.SM1
            </div>
            <button type="button" className="flex w-[126px] items-center gap-[5px] pl-[7px]">
                <svg width="16" height="16" viewBox="0 0 16 16">
                    <path d="M8 0a8 7 0 0 1 2 13.600L6 16v-2.300A8 7 0 0 1 8 0z" fill="#fff" />
                    <path d="M4 7h2M7 7h2M10 7h2" stroke="#474747" strokeWidth="1.6" />
                </svg>
                Messages
            </button>
            <div className="h-[18px] w-[217px] border-r border-[#c8c8c8] leading-[17px] whitespace-nowrap">Average: 1,710,859.66 Sum: 1,710,859.66</div>
            <button type="button" className="flex h-[18px] w-[119px] items-center gap-[5px] border-r border-[#c8c8c8] pl-[7px] whitespace-nowrap">
                <svg width="15" height="15" viewBox="0 0 15 15" fill="none" stroke="#fff" strokeWidth="1.6">
                    <path d="M4.500 1.800A6.500 6.500 0 1 0 10.500 1.800" />
                    <path d="M8 4v4l-2.500 2.500" />
                    <path d="M7 0v4l3.500-2z" fill="#fff" stroke="none" />
                </svg>
                Override Report
            </button>
            <button type="button" className="flex items-center gap-[7px] pl-[8px]">
                <svg width="14" height="15" viewBox="0 0 14 15"><path d="M7 0q1.300 0 1.300 1.300Q11.500 2.500 11.500 7q0 3.500 2.500 5H0q2.500-1.500 2.500-5 0-4.500 3.200-5.700Q5.700 0 7 0zM5 13h4q-.5 2-2 2t-2-2z" fill="#fff" /></svg>
                Notifications
            </button>
            <div className="ml-auto flex h-full items-center">
                <IconButton label="Tools" className="w-[30px]">
                    <svg width="16" height="16" viewBox="0 0 16 16" stroke="#fff" fill="none">
                        <path d="M1 15L14 2" strokeWidth="3.5" />
                        <path d="M2 2a2.500 2.500 0 1 0 4 1M5 6l6 6M10 13a2.500 2.500 0 1 0 3-3" strokeWidth="1.8" />
                    </svg>
                </IconButton>
                <IconButton label="Filter" className="w-[30px]">
                    <svg width="14" height="16" viewBox="0 0 14 16"><path d="M0 0h14v2L9 8v5l-4 3V8L0 2z" fill="#fff" /></svg>
                </IconButton>
                <IconButton label="Details" className="h-full w-[31px] bg-[#333]">
                    <svg width="14" height="16" viewBox="0 0 14 16" fill="none">
                        <rect x=".5" y=".5" width="13" height="15" rx="1" stroke="#777" />
                        <path d="M3 3h8v4H3z" fill="#fff" />
                        <path d="M3 9.500h8M3 11.500h8M3 13.500h8" stroke="#aaa" />
                    </svg>
                </IconButton>
            </div>
        </footer>
    );
}

export default function App() {
    return (
        <div className="flex h-screen flex-col overflow-hidden bg-[#f4f4f4] p-[3px] font-['Open_Sans','Noto_Sans',sans-serif] text-[12px]">
            <TitleBar />
            <div className="flex min-h-0 flex-1 flex-col border-x border-[#555] bg-[#f0f0f0]">
                <Ribbon />
                <div className="flex min-h-0 flex-1">
                    <RecentRail />
                    <main className="flex min-w-0 flex-1 flex-col pr-[2px]">
                        <DocumentTabs />
                        <div className="flex min-h-0 flex-1 gap-1 px-1 pt-[10px] pb-[7px]">
                            <SidePanel />
                            <ForecastGrid />
                        </div>
                    </main>
                </div>
            </div>
            <StatusBar />
        </div>
    );
}
